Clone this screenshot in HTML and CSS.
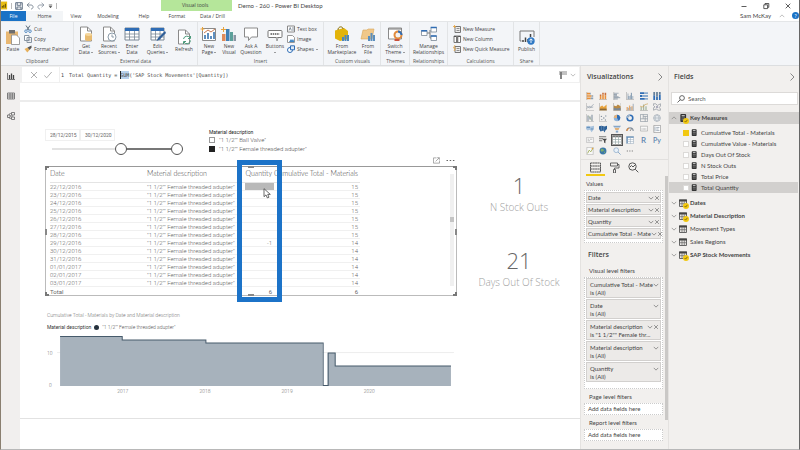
FILE: index.html
```html
<!DOCTYPE html>
<html lang="en">
<head>
<meta charset="utf-8">
<title>Demo - 260 - Power BI Desktop</title>
<link rel="stylesheet" href="styles.css">
</head>
<body>
<svg class="defs" aria-hidden="true">
  <symbol id="chev-down" viewBox="0 0 8 8"><path d="M1 2.500 4 5.500 7 2.500" fill="none" stroke="currentColor"/></symbol>
  <symbol id="chev-up" viewBox="0 0 8 8"><path d="M1 5.500 4 2.500 7 5.500" fill="none" stroke="currentColor"/></symbol>
  <symbol id="chev-right" viewBox="0 0 8 8"><path d="M2.500 .5 6 4 2.500 7.500" fill="none" stroke="currentColor"/></symbol>
  <symbol id="close" viewBox="0 0 8 8"><path d="M1.500 1.500l5 5M6.500 1.500l-5 5" fill="none" stroke="currentColor"/></symbol>
  <symbol id="doc" viewBox="0 0 16 16"><path d="M2.500 1h7l4 4v10h-11z" fill="#fff" stroke="#8a8a8a"/><path d="M9.500 1v4h4" fill="none" stroke="#8a8a8a"/></symbol>
  <symbol id="calc" viewBox="0 0 8 9"><rect x="1" width="6.500" height="9" rx="1" fill="#333"/><path d="M2.500 2h3.500" stroke="#fff"/><path d="M2.500 4.500h3.500M2.500 6.500h3.500" stroke="#aaa" stroke-dasharray="1 .3"/></symbol>
  <symbol id="tbl" viewBox="0 0 8 8"><path d="M.5 1h7v6.500h-7z" fill="#e8e6e4" stroke="#666"/><path d="M0 1.500h8" stroke="#444" stroke-width="2"/><path d="M.5 4.700h7M3 2v5.500M5.300 2v5.500" stroke="#666" stroke-width=".7"/></symbol>
  <symbol id="tick" viewBox="0 0 6 6"><circle cx="3" cy="3" r="3" fill="#f2c811"/><path d="M1.600 3.100l1 1 1.800-2.200" fill="none" stroke="#5b4c10" stroke-width=".7"/></symbol>
</svg>

<header class="titlebar">
  <div class="quick">
    <svg class="logo" viewBox="0 0 8 9"><path d="M0 0h7v9H0z" fill="#e8bd13"/><path d="M1.500 7V5M3.200 7V4M5 7V2.500" stroke="#4a3b00"/></svg>
    <i class="bar"></i>
    <button aria-label="Save"><svg viewBox="0 0 8 8"><path d="M.7.7h6.600v6.600H.7zM2.200.7v2.600h3.600V.7M2 7.300V5h4v2.300" fill="none" stroke="#56677c" stroke-width=".9"/></svg></button>
    <button aria-label="Undo"><svg viewBox="0 0 8 8"><path d="M3.500.8 1 3l2.500 2.200M1.200 3H5c3 .2 2.500 4 0 4" fill="none" stroke="#7b8794" stroke-width=".9"/></svg></button>
    <button aria-label="Redo"><svg viewBox="0 0 8 8"><path d="M4.500.8 7 3 4.500 5.200M6.800 3H3C0 3.200.5 7 3 7" fill="none" stroke="#8e99a5" stroke-width=".9"/></svg></button>
    <button class="more" aria-label="Customize"><svg viewBox="0 0 5 8"><path d="M.8 3h3.400" stroke="#333" stroke-width=".7"/><path d="M.8 4.300h3.400L2.500 6z" fill="#333"/></svg></button>
    <i class="bar"></i>
  </div>
  <div class="context">Visual tools</div>
  <div class="title">Demo - 260 - Power BI Desktop</div>
  <div class="window">
    <button aria-label="Minimize"><svg viewBox="0 0 8 8"><path d="M1.500 4.500h5" stroke="#333" stroke-width=".8"/></svg></button>
    <button aria-label="Restore"><svg viewBox="0 0 8 8"><path d="M1.800 2.800h3.800v3.800H1.800zM3 2.700V1.500h3.800v3.800H5.700" fill="none" stroke="#333" stroke-width=".8"/></svg></button>
    <button aria-label="Close"><svg viewBox="0 0 8 8"><path d="M1.700 1.700l4.600 4.600M6.300 1.700 1.700 6.300" stroke="#333" stroke-width=".8"/></svg></button>
  </div>
</header>

<nav class="tabs">
  <button class="file">File</button>
  <button class="home">Home</button>
  <button class="view">View</button>
  <button class="modeling">Modeling</button>
  <button class="help">Help</button>
  <button class="format">Format</button>
  <button class="drill">Data / Drill</button>
  <span class="user">Sam McKay</span>
  <svg class="s6 faint"><use href="#chev-up"/></svg>
  <button class="info" aria-label="Help">?</button>
</nav>

<section class="ribbon">
  <div class="group g-clip">
    <div class="tools">
      <button class="big w-22"><svg viewBox="0 0 16 16"><path d="M1 2.500h12V15H1z" fill="#e9b872"/><path d="M4 1h6v3.500H4z" fill="#6d6d6d"/><path d="M6.500 6h5l3 3v6.500h-8z" fill="#fff" stroke="#888" stroke-width=".8"/></svg>Paste</button>
      <div class="small">
        <button><svg viewBox="0 0 8 8"><path d="M2 .5 5 5M6 .5 3 5" stroke="#5d6c7c"/><circle cx="2" cy="6.200" r="1.300" fill="none" stroke="#5a8fc4"/><circle cx="6" cy="6.200" r="1.300" fill="none" stroke="#5a8fc4"/></svg>Cut</button>
        <button><svg viewBox="0 0 8 8"><path d="M.5.500h4.500v5H.5zM3 2.500h4.500v5H3z" fill="#fff" stroke="#8794a2"/><path d="M4 4.300h2.500M4 5.800h2.500" stroke="#8794a2" stroke-width=".6"/></svg>Copy</button>
        <button><svg viewBox="0 0 8 8"><path d="M.5 4 3.500 2.500l2 2.500-2.200 2.500z" fill="#e6b05c"/><path d="M3.500 2.500 7.500.5v2.200L5.500 5" fill="#555"/></svg>Format Painter</button>
      </div>
    </div>
    <h2>Clipboard</h2>
  </div>
  <div class="group g-data">
    <div class="tools">
      <button class="big w-22"><svg><use href="#doc"/><path d="M7 8.500v5c0 2 7 2 7 0v-5" fill="#e8bb70"/><ellipse cx="10.500" cy="8.500" rx="3.500" ry="1.400" fill="#f5d79e"/></svg>Get<br>Data <b></b></button>
      <button class="big w-24"><svg><use href="#doc"/><circle cx="11" cy="11" r="4" fill="#fff" stroke="#8a9aa8"/><path d="M11 8.500V11h2" fill="none" stroke="#8a9aa8"/></svg>Recent<br>Sources <b></b></button>
      <button class="big w-22"><svg viewBox="0 0 16 16"><path d="M1 2h14v12H1z" fill="#fff" stroke="#7a8896"/><path d="M1 2h14v3H1z" fill="#2f6db5"/><path d="M1 8h14M1 11h14M5.500 5v9M10.500 5v9" stroke="#7a8896" stroke-width=".8"/></svg>Enter<br>Data</button>
      <button class="big w-29"><svg viewBox="0 0 16 16"><path d="M1 2h13v12H1z" fill="#fff" stroke="#7a8896"/><path d="M1 2h13v3H1z" fill="#2f6db5"/><path d="M1 8h13M1 11h13M5.500 5v9M10 5v9" stroke="#7a8896" stroke-width=".8"/><path d="M15 5 8 12l-1.500 3 3-1.200L16 7z" fill="#2f5f99"/></svg>Edit<br>Queries <b></b></button>
      <button class="big w-24"><svg><use href="#doc"/><path d="M7.500 10a3.500 3.500 0 0 1 6.500-1M14.500 11.500a3.500 3.500 0 0 1-6.500 1.500M14.500 7v2.500H12M7.500 15v-2.500H10" fill="none" stroke="#4b9a7a"/></svg>Refresh</button>
    </div>
    <h2>External data</h2>
  </div>
  <div class="group g-insert">
    <div class="tools">
      <button class="big w-20"><svg viewBox="0 0 16 16"><path d="M1.500 2.500h13v12h-13z" fill="#fff" stroke="#8a8a8a"/><path d="M4 13V9M7 13V7M10 13v-3M13 13V6" stroke="#5f8fc0" stroke-width="2"/><path d="m3 7 4-3 3 2 4-3" fill="none" stroke="#c97a52"/><path d="M1.500 1v4M-.5 3h4" stroke="#e8a33c"/></svg>New<br>Page <b></b></button>
      <button class="big w-20"><svg viewBox="0 0 16 16"><path d="M1 8h3.500v7H1z" fill="#e08a5a"/><path d="M5 3h3.500v12H5z" fill="#3f7fb6"/><path d="M9 6h3v9H9z" fill="#5ca09a"/><path d="M12.500 9H15v6h-2.500z" fill="#8a96a3"/><path d="M2.500 1v5M0 3.500h5" stroke="#e8a33c"/></svg>New<br>Visual</button>
      <button class="big w-24"><svg viewBox="0 0 16 16"><path d="M1.500 2h13v9h-6l-3 3.500V11h-4z" fill="#fff" stroke="#8a8a8a"/></svg>Ask A<br>Question</button>
      <button class="big w-24"><svg viewBox="0 0 16 16"><rect x="1" y="4.500" width="14" height="7" rx="1" fill="#fff" stroke="#777"/><path d="M3.500 8h9" stroke="#555" stroke-width="1.600" stroke-dasharray="1.500 .7"/><path d="m9 11 1 4 1-3" fill="#fff" stroke="#777" stroke-width=".7"/></svg>Buttons<br><b></b></button>
      <div class="small">
        <button><svg viewBox="0 0 8 8"><path d="M.5 1h7v6h-7z" fill="#fff" stroke="#888"/><path d="m2 5.500 1.200-3 1.200 3M5 3h2M5 5h2" fill="none" stroke="#567" stroke-width=".7"/></svg>Text box</button>
        <button><svg viewBox="0 0 8 8"><path d="M.5.500h5l2 2v5h-7z" fill="#fff" stroke="#999"/><path d="m2 7 2-3 1 1.500L6 4l1.500 3z" fill="#3f86c4"/></svg>Image</button>
        <button><svg viewBox="0 0 8 8"><circle cx="3" cy="5" r="2.500" fill="#fff" stroke="#2f6db5"/><path d="M3.500.8h4v4h-4z" fill="#dbe8f6" stroke="#2f6db5"/></svg>Shapes <b></b></button>
      </div>
    </div>
    <h2>Insert</h2>
  </div>
  <div class="group g-custom">
    <div class="tools">
      <button class="big w-32"><svg viewBox="0 0 16 16"><path d="M1 4.500 10 2l4 3v8L6 15l-5-2.500z" fill="#e3b40a"/><path d="M4 4c0-4 5-4 5-1" fill="none" stroke="#8a6d00"/><path d="M9 15v-4M11.500 15V9M14 15v-6" stroke="#4c87bd" stroke-width="2"/></svg>From<br>Marketplace</button>
      <button class="big w-20"><svg viewBox="0 0 16 16"><path d="M1 13 3 4h4l1-1h6l-2 10z" fill="#f0c88a" stroke="#d9a657" stroke-width=".6"/><path d="M9 15v-5M11.500 15V7M14 15V9" stroke="#5b8fbe" stroke-width="2"/></svg>From<br>File</button>
    </div>
    <h2>Custom visuals</h2>
  </div>
  <div class="group g-theme">
    <div class="tools">
      <button class="big w-24"><svg viewBox="0 0 16 16"><path d="M1.500 2h13v11h-13z" fill="#fff" stroke="#8a8a8a"/><path d="M1.500 3h13" stroke="#777"/><circle cx="11" cy="9" r="3.500" fill="#f2f2f2" stroke="#e08a3c" stroke-width="2"/><path d="M11 5.500A3.500 3.500 0 0 1 14.500 9" fill="none" stroke="#2f6db5" stroke-width="2"/><path d="M7.500 14h5" stroke="#c94f3a" stroke-width="2"/></svg>Switch<br>Theme <b></b></button>
    </div>
    <h2>Themes</h2>
  </div>
  <div class="group g-rel">
    <div class="tools">
      <button class="big w-36"><svg viewBox="0 0 16 16"><path d="M6 7h3M9 4v8h2" fill="none" stroke="#777"/><path d="M.5 5h5.500v4.500H.5zM10 1.500h5.500V6H10zM10 10h5.500v4.500H10z" fill="#fff" stroke="#7a8896" stroke-width=".8"/><path d="M.2 4.800h6M9.700 1.500h6M9.700 10h6" stroke="#2f6db5" stroke-width="1.500"/></svg>Manage<br>Relationships</button>
    </div>
    <h2>Relationships</h2>
  </div>
  <div class="group g-calc">
    <div class="tools">
      <div class="small">
        <button><svg viewBox="0 0 8 8"><path d="M2 1.500h5.500v6H2z" fill="#eee" stroke="#777"/><path d="M3.500 3.500h3M3.500 5.500h3" stroke="#777" stroke-width=".8"/><path d="M1.500 0v3M0 1.500h3" stroke="#e8a33c" stroke-width=".8"/></svg>New Measure</button>
        <button><svg viewBox="0 0 8 8"><path d="M1 1h6.500v6.500H1z" fill="#fff" stroke="#777"/><path d="M1 1.500h6.500" stroke="#555"/><path d="M3 1h2.300v6.500H3z" fill="#777"/></svg>New Column</button>
        <button><svg viewBox="0 0 8 8"><path d="M2 1.500h5.500v6H2z" fill="#eee" stroke="#777"/><path d="M3.500 3.500h3M3.500 5.500h3" stroke="#777" stroke-width=".8"/><path d="m2 0-1.500 3h2L1 6" fill="none" stroke="#e8a33c" stroke-width=".8"/></svg>New Quick Measure</button>
      </div>
    </div>
    <h2>Calculations</h2>
  </div>
  <div class="group g-share">
    <div class="tools">
      <button class="big w-24"><svg viewBox="0 0 16 16"><path d="M2.500 12H1V2h14v6" fill="none" stroke="#777"/><path d="M4 13v-2M6.500 13V8.500M9 13v-3M11.500 8V5" stroke="#444" stroke-width="1.500"/><circle cx="12" cy="12" r="3.700" fill="#2f78c4"/><path d="M12 14v-4M10.300 11.500 12 9.800l1.700 1.700" fill="none" stroke="#fff" stroke-width=".9"/></svg>Publish</button>
    </div>
    <h2>Share</h2>
  </div>
</section>

<div class="work">
  <nav class="rail">
    <button aria-label="Report"><svg viewBox="0 0 8 8"><path d="M.5 1v6.500H8" fill="none" stroke="#444" stroke-width=".7"/><path d="M2.500 7V3M4.500 7V1.500M6.500 7V3" stroke="#444" stroke-width="1.300"/></svg></button>
    <button aria-label="Data"><svg viewBox="0 0 8 8"><path d="M.5 1h7v6h-7zM.5 3h7M.5 5h7M3 1v6M5.300 1v6" fill="none" stroke="#666" stroke-width=".8"/></svg></button>
    <button aria-label="Model"><svg viewBox="0 0 8 8"><path d="M.5 3h2.500v2.500H.5zM4.500.5h3V3h-3zM4.500 5h3v2.500h-3zM2 3c0-1.500 1-1.500 2.500-1.500M2 5.500c0 1 1 1 2.500 1M3 4h3" fill="none" stroke="#666" stroke-width=".8"/></svg></button>
  </nav>

  <main class="report">
    <div class="formula">
      <div class="commit">
        <button aria-label="Cancel"><svg viewBox="0 0 8 8"><path d="M1 1l6 6M7 1 1 7" stroke="#999" stroke-width=".8"/></svg></button>
        <button aria-label="Accept"><svg viewBox="0 0 8 8"><path d="m.3 4.500 2.400 2.300L7.700 1" fill="none" stroke="#999" stroke-width=".8"/></svg></button>
      </div>
      <div class="editor">
        <label for="dax">1</label>
        <div class="code"><span class="mark"></span><input id="dax" value="Total Quantity = SUM('SAP Stock Movements'[Quantity])"></div>
        <svg class="s8" viewBox="0 0 8 8"><path d="M0 1h8M0 3h8" stroke="#888" stroke-width="1.200"/><path d="M2 1v7" stroke="#777" stroke-width="1.800"/></svg>
        <svg class="s6 faint"><use href="#chev-down"/></svg>
      </div>
    </div>

    <div class="page">
      <div class="visuals">
        <div class="slicers">
          <div class="dates">
            <div class="pair">
              <input aria-label="Start date" value="28/12/2015"><input aria-label="End date" value="30/12/2020">
            </div>
            <div class="range">
              <input type="range" aria-label="From" value="55"><input type="range" aria-label="To" value="100">
            </div>
          </div>
          <fieldset class="material">
            <legend>Material description</legend>
            <label><input type="checkbox">"1 1/2"" Ball Valve"</label>
            <label><input type="checkbox" checked>"1 1/2"" Female threaded adupter"</label>
          </fieldset>
        </div>

        <div class="toolbar">
          <svg class="s7" viewBox="0 0 8 8"><path d="M4 1H.5v6h7V4M3 5l4-4M4.800.8H7.300v2.400" fill="none" stroke="#777" stroke-width=".7"/></svg>
          <svg class="dots" viewBox="0 0 9 3"><path d="M.5 1.500h8" stroke="#666" stroke-dasharray="1.500 1.700"/></svg>
        </div>
        <div class="tablebox">
          <table>
            <thead><tr><th>Date</th><th>Material description</th><th>Quantity</th><th>Cumulative Total - Materials</th></tr></thead>
            <tbody>
              <tr><td>22/12/2016</td><td>"1 1/2"" Female threaded adupter"</td><td class="picked"></td><td>15</td></tr>
              <tr><td>23/12/2016</td><td>"1 1/2"" Female threaded adupter"</td><td></td><td>15</td></tr>
              <tr><td>24/12/2016</td><td>"1 1/2"" Female threaded adupter"</td><td></td><td>15</td></tr>
              <tr><td>25/12/2016</td><td>"1 1/2"" Female threaded adupter"</td><td></td><td>15</td></tr>
              <tr><td>26/12/2016</td><td>"1 1/2"" Female threaded adupter"</td><td></td><td>15</td></tr>
              <tr><td>27/12/2016</td><td>"1 1/2"" Female threaded adupter"</td><td></td><td>15</td></tr>
              <tr><td>28/12/2016</td><td>"1 1/2"" Female threaded adupter"</td><td></td><td>15</td></tr>
              <tr><td>29/12/2016</td><td>"1 1/2"" Female threaded adupter"</td><td>-1</td><td>14</td></tr>
              <tr><td>30/12/2016</td><td>"1 1/2"" Female threaded adupter"</td><td></td><td>14</td></tr>
              <tr><td>31/12/2016</td><td>"1 1/2"" Female threaded adupter"</td><td></td><td>14</td></tr>
              <tr><td>01/01/2017</td><td>"1 1/2"" Female threaded adupter"</td><td></td><td>14</td></tr>
              <tr><td>02/01/2017</td><td>"1 1/2"" Female threaded adupter"</td><td></td><td>14</td></tr>
              <tr><td>03/01/2017</td><td>"1 1/2"" Female threaded adupter"</td><td></td><td>14</td></tr>
            </tbody>
            <tfoot><tr><td>Total</td><td></td><td>6</td><td>6</td></tr></tfoot>
          </table>
          <div class="scroll"><i></i></div>
          <span class="handle tl"></span><span class="handle tr"></span><span class="handle bl"></span><span class="handle br"></span>
          <span class="grip left"></span><span class="grip right"></span><span class="grip top"></span><span class="grip bottom"></span>
          <div class="highlight"></div>
          <svg class="cursor" viewBox="0 0 8 11"><path d="M1 .7v8l2-1.800 1.300 3L6 9.200 4.700 6.400h2.600z" fill="#fff" stroke="#444" stroke-width=".8"/></svg>
        </div>

        <div class="chart">
          <h3>Cumulative Total - Materials by Date and Material description</h3>
          <p class="legend"><strong>Material description</strong><i></i>"1 1/2"" Female threaded adupter"</p>
          <svg viewBox="0 0 412 62">
            <path d="M12 19.500h396" stroke="#e6e6e6" stroke-width=".7"/>
            <path d="M15 53V3.500h62V7h83.500v3H277v43zM282 53V20h7.500v13H405v20z" fill="#a7b2bc"/>
            <path d="M15 3.500h62V7h83.500v3H277.500v42.500h5V20h7v13H405" fill="none" stroke="#465a6b"/>
            <g class="axis"><text x="2" y="22">10</text><text x="4" y="54">0</text><text x="72" y="60">2017</text><text x="154" y="60">2018</text><text x="236" y="60">2019</text><text x="318" y="60">2020</text></g>
          </svg>
        </div>
      </div>

      <div class="cards">
        <div class="card"><span>1</span>N Stock Outs</div>
        <div class="card"><span>21</span>Days Out Of Stock</div>
      </div>
    </div>
  </main>

  <aside class="viz">
    <h2>Visualizations<svg class="s8"><use href="#chev-right"/></svg></h2>
    <div class="gallery">
      <svg viewBox="0 0 10 10"><path d="M1 0v10" stroke="#999" stroke-width=".7"/><path d="M1 2h4M1 5h6M1 8h5" stroke="#e8913c" stroke-width="2"/><path d="M5 2h1M7 5h2M6 8h3" stroke="#8aa0b4" stroke-width="2"/></svg>
      <svg viewBox="0 0 10 10"><path d="M0 9.500h10" stroke="#999" stroke-width=".7"/><path d="M2 9V5M5 9V3M8 9V4" stroke="#e8913c" stroke-width="2"/><path d="M2 5V3M5 3V1M8 4V1" stroke="#c96f3c" stroke-width="2"/></svg>
      <svg viewBox="0 0 10 10"><path d="M1 0v10" stroke="#999" stroke-width=".7"/><path d="M1 1.500h6M1 4.500h4M1 7h8" stroke="#aab4be" stroke-width="1.400"/><path d="M1 3h4M1 6h6M1 8.700h5" stroke="#6e7f90" stroke-width=".9"/></svg>
      <svg viewBox="0 0 10 10"><path d="M0 9.500h10M.5 0v9" stroke="#999" stroke-width=".7"/><path d="M2.500 9V2M5.500 9V4M8.500 9V5" stroke="#a9b6c2" stroke-width="1.300"/><path d="M3.700 9V5M6.700 9V1" stroke="#60809e"/></svg>
      <svg viewBox="0 0 10 10"><path d="M0 1.500h5M0 5h3M0 8.500h6" stroke="#2f6db5" stroke-width="2.200"/><path d="M5 1.500h5M3 5h7M6 8.500h4" stroke="#8eadcf" stroke-width="2.200"/></svg>
      <svg viewBox="0 0 10 10"><path d="M1.500 10V4M5 10V6M8.500 10V3" stroke="#2f6db5" stroke-width="2.200"/><path d="M1.500 4V0M5 6V0M8.500 3V0" stroke="#65809b" stroke-width="2.200"/></svg>

      <svg viewBox="0 0 10 10"><path d="M.5 0v9.500H10" fill="none" stroke="#aaa" stroke-width=".7"/><path d="m1 7 3-3 2 1 3.500-3.500M1 4l3 2 5-1" fill="none" stroke="#8794a2" stroke-width=".8"/></svg>
      <svg viewBox="0 0 10 10"><path d="M.5 0v9.500H10" fill="none" stroke="#999" stroke-width=".7"/><path d="M1 9V5l3-2 2 2 3.500-3v7z" fill="#e8a33c"/><path d="M1 9V7l8.500 0v2z" fill="#8a6a3a"/></svg>
      <svg viewBox="0 0 10 10"><path d="M.5 0v9.500H10V0" fill="none" stroke="#999" stroke-width=".7"/><path d="M1 9V3l3 1 2-2 3.500 2v5z" fill="#b98a44"/><path d="M1 9V6l4 1 4.500-1v3z" fill="#7a8896"/></svg>
      <svg viewBox="0 0 10 10"><path d="M0 9.500h10" stroke="#999" stroke-width=".7"/><path d="M1.500 9V5M4.500 9V3M7.500 9V4" stroke="#e8a96c" stroke-width="1.600"/><path d="M3 9V6M6 9V5M9 9V1" stroke="#8ea0b0"/></svg>
      <svg viewBox="0 0 10 10"><path d="M0 9.500h10" stroke="#999" stroke-width=".7"/><path d="M1.500 9V5M4.500 9V2M7.500 9V4" stroke="#a8b7a0" stroke-width="1.600"/><path d="m0 4 4 1 2-3 4-1" fill="none" stroke="#c9a050" stroke-width=".8"/></svg>
      <svg viewBox="0 0 10 10"><path d="M.5 1h3l2 2 4-2v3l-2 1.500 2 2V9h-3L4 7.500.5 9V6l2-1-2-2z" fill="none" stroke="#8f979f" stroke-width=".9"/><circle cx="5" cy="5" r="1.500" fill="#aab"/></svg>

      <svg viewBox="0 0 10 10"><path d="M.5 0v9.500H10" fill="none" stroke="#aaa" stroke-width=".7"/><path d="M2.500 9V2M5 7V3M7.500 9V1" stroke="#8c9aa8" stroke-width="1.500"/><path d="M3 2l4 6" stroke="#9cb08c" stroke-width=".7"/></svg>
      <svg viewBox="0 0 10 10"><path d="M.5 0v9.500H10" fill="none" stroke="#aaa" stroke-width=".7"/><g fill="#8794a2"><circle cx="3" cy="3" r=".9"/><circle cx="6" cy="5" r="1"/><circle cx="8.500" cy="2.500" r=".8"/><circle cx="3.500" cy="7" r=".8"/><circle cx="8" cy="7.500" r=".8"/></g></svg>
      <svg viewBox="0 0 10 10"><circle cx="5" cy="5" r="4" fill="#8fb2d8"/><path d="M5 5V1a4 4 0 0 1 2 7.500z" fill="#2f6db5"/><path d="M5 5H1a4 4 0 0 1 4-4z" fill="#e3b27c"/></svg>
      <svg viewBox="0 0 10 10"><circle cx="5" cy="5" r="3.500" fill="none" stroke="#2f6db5" stroke-width="2"/><path d="M1.500 5A3.500 3.500 0 0 1 5 1.500" fill="none" stroke="#9fb4c9" stroke-width="2"/></svg>
      <svg viewBox="0 0 10 10"><path d="M.5.500h9v9h-9zM.5 6h9M4 .5V6M4 3h5.500M6.500 3v6.500" fill="none" stroke="#8f99a3" stroke-width=".9"/></svg>
      <svg viewBox="0 0 10 10"><circle cx="5" cy="5" r="4.200" fill="#e4e8ec" stroke="#9aa4ae" stroke-width=".8"/><path d="M.8 5h8.400M5 .8c-3 2.500-3 6 0 8.400 3-2.500 3-6 0-8.400" fill="none" stroke="#9aa4ae" stroke-width=".6"/></svg>

      <svg viewBox="0 0 10 10"><path d="M0 2l3-1 3 1 4-1v4L7 9l-2-3-3 1-2-2z" fill="#a9c3dd"/><path d="M1 3h4M6 5h3" stroke="#4e7dae"/></svg>
      <svg viewBox="0 0 10 10"><path d="M0 1.500 3 1l4 1 3-1v4L8 7 7 9.500 5.500 7 2 8 0 5z" fill="#2c5f96"/><path d="M3 1v6M6 2v5" stroke="#89a9c9" stroke-width=".6"/></svg>
      <svg viewBox="0 0 10 10"><path d="M0 1h10L8.500 3h-7z" fill="#86a6c8"/><path d="M2 4h6L7 6H3z" fill="#d99b52"/><path d="M3.500 7h3v2.500h-3z" fill="#86a6c8"/></svg>
      <svg viewBox="0 0 10 10"><path d="M1 7.500a4 4 0 0 1 8 0" fill="none" stroke="#8a96a3" stroke-width="1.500"/><path d="M1 7.500A4 4 0 0 1 3.500 4" fill="none" stroke="#e08a3c" stroke-width="1.500"/><path d="m5 7.500 2-3" stroke="#555" stroke-width=".8"/></svg>
      <svg viewBox="0 0 10 10"><path d="M.5 1.500h9v6h-9z" fill="#f8f8f8" stroke="#a4a4a4" stroke-width=".8"/><path d="M2 5h6" stroke="#888" stroke-dasharray="1 .6"/></svg>
      <svg viewBox="0 0 10 10"><path d="M1 .5h8.500v9H1z" fill="#fff" stroke="#8a8a8a" stroke-width=".8"/><path d="M2.500 2v6M4 3h4M4 5h3M4 7h4" stroke="#789" stroke-width=".8"/></svg>

      <svg viewBox="0 0 10 10"><path d="M.5 2h9v6h-9z" fill="#fafafa" stroke="#b0b0b0" stroke-width=".8"/><path d="M2 4h2M5 4h3M2 6h3" stroke="#999" stroke-width=".8"/></svg>
      <svg viewBox="0 0 10 10"><path d="M0 1h9M0 3.500h5M0 6h4" stroke="#777" stroke-width="1.300"/><path d="M4 3.500h6L8 6v3L6.300 8V6z" fill="#444"/></svg>
      <svg class="current" viewBox="0 0 10 10"><path d="M.5.500h9v9h-9z" fill="#fff" stroke="#8a8a8a" stroke-width=".8"/><path d="M.5 1.500h9" stroke="#777" stroke-width="1.500"/><path d="M.5 4.500h9M.5 7h9M3.500 1v8.500M6.500 1v8.500" stroke="#9aa" stroke-width=".7"/></svg>
      <svg viewBox="0 0 10 10"><path d="M.5.500h9v9h-9z" fill="#fff" stroke="#9fb0c0" stroke-width=".8"/><path d="M.5 1.500h9M1.500 1v8" stroke="#5f8ab4" stroke-width="1.500"/><path d="M.5 4.500h9M.5 7h9M5.500 1v8.500" stroke="#9ab" stroke-width=".7"/></svg>
      <span class="r">R</span>
      <span class="py">Py</span>

      <svg viewBox="0 0 10 10"><path d="M1 .5h8v9H1z" fill="#f8f8f8" stroke="#aaa" stroke-width=".7"/><path d="m2 8 2-4 2 2 3-5" fill="none" stroke="#9aa84c"/><circle cx="8" cy="2" r="1" fill="#e8a33c"/></svg>
      <svg viewBox="0 0 10 10"><circle cx="5" cy="5" r="4.300" fill="#3c78a8"/><path d="M3 2l3 1 0 2-3 1-1-2M6 6l2 0-1 2z" fill="#7fae6a"/></svg>
      <svg viewBox="0 0 10 10"><circle cx="4" cy="4" r="3" fill="#e9f1f9" stroke="#8aa9c8" stroke-width=".9"/><path d="m6.300 6.300 3.200 3.200" stroke="#8aa9c8" stroke-width="1.200"/></svg>
      <svg viewBox="0 0 10 10"><path d="M1 5h8" stroke="#777" stroke-width="1.300" stroke-dasharray="1.400 1.700"/></svg>
    </div>
    <div class="modes">
      <button class="on" aria-label="Fields"><svg viewBox="0 0 11 11"><path d="M.5 1h10v9H.5zM.5 4h10M.5 7h10" fill="none" stroke="#555" stroke-dasharray="2 .3"/></svg></button>
      <button aria-label="Format"><svg viewBox="0 0 11 11"><path d="M1.500 1h7v3h-7zM8.500 2.500h1.500V6H5.500v1.500M4.500 7.500h2V11h-2z" fill="none" stroke="#555" stroke-width=".9"/></svg></button>
      <button aria-label="Analytics"><svg viewBox="0 0 11 11"><circle cx="4.500" cy="4.500" r="3.700" fill="none" stroke="#555"/><path d="m7.300 7.300 3 3M2 5l1.500-1.500L5 5l2-2" fill="none" stroke="#555"/></svg></button>
    </div>
    <div class="viz-body">
      <div class="viz-scroll">
        <h4>Values</h4>
        <ul class="well">
          <li><span>Date</span><svg><use href="#chev-down"/></svg><svg><use href="#close"/></svg></li>
          <li><span>Material description</span><svg><use href="#chev-down"/></svg><svg><use href="#close"/></svg></li>
          <li><span>Quantity</span><svg><use href="#chev-down"/></svg><svg><use href="#close"/></svg></li>
          <li><span>Cumulative Total - Mate</span><svg><use href="#chev-down"/></svg><svg><use href="#close"/></svg></li>
        </ul>
        <h3>Filters</h3>
        <h4 class="in first">Visual level filters</h4>
        <ul class="filters">
          <li><p><span>Cumulative Total - Mate</span><svg><use href="#chev-down"/></svg></p>is (All)</li>
          <li><p><span>Date</span><svg><use href="#chev-down"/></svg></p>is (All)</li>
          <li><p><span>Material description</span><svg><use href="#chev-down"/></svg><svg><use href="#close"/></svg></p>is "1 1/2"" Female thr...</li>
          <li><p><span>Material description</span><svg><use href="#chev-down"/></svg></p>is (All)</li>
          <li><p><span>Quantity</span><svg><use href="#chev-down"/></svg></p>is (All)</li>
        </ul>
        <h4 class="in">Page level filters</h4>
        <div class="drop">Add data fields here</div>
        <h4 class="in">Report level filters</h4>
        <div class="drop">Add data fields here</div>
      </div>
      <i class="thumb"></i>
    </div>
  </aside>

  <aside class="fields">
    <h2>Fields<svg class="s8"><use href="#chev-right"/></svg></h2>
    <div class="search"><svg class="s8" viewBox="0 0 8 8"><circle cx="5" cy="3" r="2.400" fill="none" stroke="#444" stroke-width=".8"/><path d="M3.300 4.700.500 7.500" stroke="#444" stroke-width=".8"/></svg><input type="search" aria-label="Search" placeholder="Search"></div>
    <div class="entity open bold"><svg class="s6"><use href="#chev-up"/></svg><span class="ico"><svg><use href="#calc"/></svg><svg class="tick"><use href="#tick"/></svg></span>Key Measures</div>
    <div class="measures">
      <label><input type="checkbox" checked><svg><use href="#calc"/></svg>Cumulative Total - Materials</label>
      <label><input type="checkbox"><svg><use href="#calc"/></svg>Cumulative Value - Materials</label>
      <label><input type="checkbox"><svg><use href="#calc"/></svg>Days Out Of Stock</label>
      <label><input type="checkbox"><svg><use href="#calc"/></svg>N Stock Outs</label>
      <label><input type="checkbox"><svg><use href="#calc"/></svg>Total Price</label>
      <label class="selected"><input type="checkbox"><svg><use href="#calc"/></svg>Total Quantity</label>
    </div>
    <div class="entity bold"><svg class="s6"><use href="#chev-down"/></svg><span class="ico"><svg><use href="#tbl"/></svg><svg class="tick"><use href="#tick"/></svg></span>Dates</div>
    <div class="entity bold"><svg class="s6"><use href="#chev-down"/></svg><span class="ico"><svg><use href="#tbl"/></svg><svg class="tick"><use href="#tick"/></svg></span>Material Description</div>
    <div class="entity"><svg class="s6"><use href="#chev-down"/></svg><span class="ico"><svg><use href="#tbl"/></svg></span>Movement Types</div>
    <div class="entity"><svg class="s6"><use href="#chev-down"/></svg><span class="ico"><svg><use href="#tbl"/></svg></span>Sales Regions</div>
    <div class="entity bold"><svg class="s6"><use href="#chev-down"/></svg><span class="ico"><svg><use href="#tbl"/></svg><svg class="tick"><use href="#tick"/></svg></span>SAP Stock Movements</div>
  </aside>
</div>
</body>
</html>
```

FILE: styles.css
```css
* { box-sizing: border-box; }

body {
  margin: 0;
  min-height: 100vh;
  display: flex;
  flex-direction: column;
  border-left: 1px solid #8a7f70;
  border-right: 1px solid #666;
  border-bottom: 1px solid #b8b8b8;
  background: #fff;
  color: #444;
  font: 5px/6px "Open Sans", "Noto Sans", sans-serif;
  overflow: hidden;
}

h2, h3, h4, p, ul, fieldset { margin: 0; padding: 0; border: 0; font: inherit; list-style: none; }
button, input { margin: 0; padding: 0; border: 0; background: none; color: inherit; font: inherit; }
svg { display: block; flex: none; }
.defs { position: absolute; width: 0; height: 0; }
.s6 { width: 6px; height: 6px; }
.s7 { width: 7px; height: 7px; }
.s8 { width: 8px; height: 8px; }
.faint { color: #aaa; }

/* Title bar and tabs */
.titlebar { display: flex; height: 11px; align-items: center; }
.quick { display: flex; align-items: center; gap: 3px; width: 160px; }
.quick svg { width: 8px; height: 8px; }
.quick .logo { width: 7px; height: 9px; }
.quick .more svg { width: 5px; }
.quick .bar { width: 1px; height: 6px; background: #bbb; }
.context { width: 71px; height: 11px; padding-left: 21px; line-height: 10px; background: #b5e69a; }
.title { flex: 1; padding-left: 6px; font: 6px/10px Lato, sans-serif; }
.window { display: flex; gap: 14px; padding-right: 7px; }
.window svg { width: 8px; height: 8px; }

.tabs { display: flex; height: 10px; align-items: stretch; }
.tabs button { text-align: center; }
.tabs .file { width: 25px; background: #1a72c6; color: #fff; }
.tabs .home { width: 37px; background: #f3f5f7; }
.tabs .view { width: 26px; }
.tabs .modeling { width: 38px; }
.tabs .help { width: 34px; }
.tabs .format { width: 32px; }
.tabs .drill { width: 39px; }
.tabs .user { margin-left: auto; font: 6px/10px Lato, sans-serif; }
.tabs > svg { margin: 2px 7px 0 8px; }
.tabs .info { width: 7px; height: 7px; margin-top: 1px; border-radius: 50%; background: #1a72c6; color: #fff; }

/* Ribbon */
.ribbon { display: flex; height: 45px; background: #f3f5f8; border-top: 1px solid #e4e6e8; border-bottom: 1px solid #dcdee0; }
.group { display: flex; flex-direction: column; padding: 2px 1px 1px; border-right: 1px solid #e2e4e6; }
.tools { display: flex; flex: 1; }
.group h2 { text-align: center; color: #555; }
.g-clip { width: 73px; }
.g-data { width: 124px; }
.g-insert { width: 126px; }
.g-custom { width: 57px; padding-left: 2px; }
.g-theme { width: 29px; padding-left: 2px; }
.g-rel { width: 38px; }
.g-calc { width: 66px; }
.g-calc .tools { padding-left: 4px; }
.g-share { width: 26px; }
.big { display: block; height: 32px; text-align: center; line-height: 6px; }
.big svg { width: 16px; height: 16px; margin: 0 auto 1px; overflow: visible; }
.ribbon b { display: inline-block; border: 1px solid transparent; border-top-color: #444; border-bottom: 0; vertical-align: middle; }
.w-20 { width: 20px; }
.w-22 { width: 22px; }
.w-24 { width: 24px; }
.w-29 { width: 29px; }
.w-32 { width: 32px; }
.w-36 { width: 36px; }
.small button { display: flex; align-items: center; gap: 2px; height: 10px; white-space: nowrap; }
.small svg { width: 8px; height: 8px; }

/* Work area */
.work { display: flex; flex: 1; }
.rail { display: flex; flex-direction: column; align-items: center; gap: 12px; width: 19px; padding-top: 6px; background: #f1efee; }
.rail svg { width: 8px; height: 8px; }
.report { flex: 1; display: flex; flex-direction: column; min-width: 0; }

.formula { display: flex; gap: 1px; height: 17px; padding: 1px 1px 1px 2px; background: #f0f0f0; }
.commit { display: flex; align-items: center; justify-content: center; gap: 6px; width: 37px; background: #fff; }
.commit svg { width: 8px; height: 8px; }
.editor { display: flex; flex: 1; align-items: center; gap: 3px; padding: 0 3px 0 1px; background: #fff; font: 5px/8px "DejaVu Sans Mono", monospace; }
.code { position: relative; flex: 1; padding-left: 2px; }
.code input { position: relative; display: block; width: 100%; }
.mark { position: absolute; left: calc(2px + 17ch); top: 0; width: 3ch; height: 8px; background: #b9d3ee; border-left: 1px solid #222; }

.page { flex: 1; display: flex; margin: 17px 0 30px; padding: 27px 0 0 25px; border-top: 2px solid #ececec; border-bottom: 1px solid #e2e2e2; font-family: Roboto, "Open Sans", sans-serif; font-weight: 300; }
.visuals { flex: 1; min-width: 0; }

.slicers { display: flex; height: 26px; }
.dates { width: 164px; }
.pair { display: flex; height: 12px; }
.pair input { width: 35px; padding-left: 4px; border: 1px solid #f0f0f0; font-weight: 400; color: #666; }
.range { position: relative; height: 12px; margin: 2px 26px 0 1px; }
.range::before { content: ""; position: absolute; left: 6px; right: 6px; top: 5px; height: 2px; background: linear-gradient(90deg, #e2e2e2 55%, #777 55%); }
.range input { position: absolute; inset: 0; width: 100%; height: 12px; appearance: none; pointer-events: none; }
.range input::-webkit-slider-thumb { appearance: none; width: 12px; height: 12px; border: 1px solid #555; border-radius: 50%; background: #fff; pointer-events: auto; }
.material legend { padding: 0; line-height: 6px; color: #222; font-weight: 400; }
.material label { display: flex; align-items: center; gap: 4px; height: 9px; font-size: 6px; color: #555; }
.material input { appearance: none; width: 6px; height: 6px; border: 1px solid #999; }
.material input:checked { background: #222; border-color: #222; }

.toolbar { display: flex; justify-content: flex-end; align-items: center; gap: 6px; height: 11px; padding-right: 3px; }
.dots { width: 9px; height: 3px; }
.tablebox { position: relative; display: flex; justify-content: space-between; height: 130px; padding: 1px 2px 0 4px; border: 1px solid #bbb; border-top-color: #999; margin-right: 1px; }
.tablebox table { width: 310px; border-collapse: collapse; table-layout: fixed; font-size: 6px; color: #666; }
.tablebox th { height: 14px; padding: 0 0 2px; border-bottom: 1px solid #e4e4e4; font: 300 7px/9px Lato, sans-serif; color: #444; text-align: left; white-space: nowrap; }
.tablebox td { height: 8px; padding: 0; line-height: 7px; border-bottom: 1px solid #f0f0f0; white-space: nowrap; }
.tablebox th:nth-child(1) { width: 97px; }
.tablebox th:nth-child(2) { width: 98px; }
.tablebox th:nth-child(3) { width: 29px; }
.tablebox th:nth-child(n+3), .tablebox td:nth-child(n+3) { padding-right: 2px; text-align: right; }
.tablebox .picked { background: #b9b9b9; }
.tablebox tfoot td { height: 11px; border: 0; border-top: 1px solid #ddd; font-weight: 400; }
.scroll { width: 4px; margin: 6px 0 9px; background: #f0f0f0; }
.scroll i { display: block; height: 5px; margin-top: 43px; background: #c4c4c4; }
.handle { position: absolute; width: 4px; height: 4px; border: 0 solid #777; }
.tl { left: -1px; top: -1px; border-width: 2px 0 0 2px; }
.tr { right: -1px; top: -1px; border-width: 2px 2px 0 0; }
.bl { left: -1px; bottom: -1px; border-width: 0 0 2px 2px; }
.br { right: -1px; bottom: -1px; border-width: 0 2px 2px 0; }
.grip { position: absolute; background: #888; }
.grip.left, .grip.right { top: 62px; width: 2px; height: 6px; }
.grip.left { left: -1px; }
.grip.right { right: -1px; }
.grip.top, .grip.bottom { left: 202px; width: 6px; height: 2px; }
.grip.top { top: -1px; }
.grip.bottom { bottom: -1px; }
.highlight { position: absolute; left: 191px; top: -7px; width: 45px; height: 142px; border: 5px solid #1c73c8; }
.cursor { position: absolute; left: 217px; top: 21px; width: 8px; height: 11px; }

.chart { padding-top: 15px; color: #777; }
.chart h3, .chart p { padding-left: 2px; line-height: 8px; }
.chart .legend { display: flex; align-items: center; gap: 3px; margin-top: 4px; color: #555; }
.chart .legend strong { font-weight: 400; color: #333; }
.chart .legend i { width: 5px; height: 5px; border-radius: 50%; background: #26323d; }
.chart svg { width: 100%; height: auto; margin-top: 2px; }
.axis { font-size: 5px; fill: #777; }

.cards { width: 122px; padding-top: 41px; text-align: center; font-family: "Open Sans", sans-serif; }
.card { height: 75px; font-size: 10px; line-height: 14px; color: #a0a0a0; }
.card span { display: block; font-size: 22px; line-height: 30px; color: #666; }

/* Side panes */
.viz, .fields { background: #f2f0ee; border-left: 1px solid #e4e2e0; font: 6px/8px Lato, "Open Sans", sans-serif; }
.viz h2, .fields h2, .viz h3 { font: 600 7px/10px "Open Sans", sans-serif; color: #444; }
.viz h2, .fields h2 { display: flex; justify-content: space-between; align-items: center; height: 22px; }
.viz h2 svg, .fields h2 svg { color: #888; }
.viz { width: 88px; display: flex; flex-direction: column; }
.viz h2 { padding: 0 4px 0 6px; }
.gallery { display: grid; grid-template-columns: repeat(6, 10px); justify-content: space-between; row-gap: 1px; padding: 3px 6px 0 4px; }
.gallery > * { width: 10px; height: 10px; }
.gallery svg { padding: 1px; }
.gallery .current { padding: 0; outline: 1px solid #555; }
.gallery span { font-size: 8px; line-height: 10px; font-weight: 600; color: #5f86b0; text-align: center; }
.gallery .py { font-size: 7px; }
.modes { display: flex; height: 17px; margin-top: 3px; padding-left: 5px; border-top: 1px solid #e2e0de; }
.modes button { width: 19px; border-bottom: 2px solid transparent; }
.modes .on { border-color: #f2c811; }
.modes svg { width: 11px; height: 11px; margin: 0 auto; }
.viz-body { display: flex; flex: 1; }
.viz-scroll { flex: 1; min-width: 0; padding: 0 2px 0 3px; }
.thumb { width: 3px; height: 244px; background: #cac8c6; }
.viz h4 { padding-left: 2px; margin: 4px 0 2px; }
.viz h4.in { padding-left: 5px; }
.viz h4.first { margin-top: 7px; }
.well, .filters { display: grid; grid-template-columns: minmax(0, 1fr); gap: 1px; padding: 1px 1px 3px; border: 1px dotted #ccc; background: #fff; }
.well li { display: flex; align-items: center; height: 11px; padding: 0 0 0 1px; background: #eceae8; border: 1px solid #d2d0ce; }
.well span, .filters span { flex: 1; white-space: nowrap; }
.well svg, .filters svg { width: 6px; height: 6px; color: #777; }
.viz h3 { margin-top: 7px; padding-left: 4px; }
.filters { padding: 0 1px 6px; }
.filters li { height: 20px; padding: 1px 1px 1px 3px; background: #eceae8; border: 1px solid #d2d0ce; }
.filters p { display: flex; align-items: center; height: 9px; }
.drop { height: 12px; padding-left: 3px; line-height: 10px; background: #fff; border: 1px dotted #ccc; }

.fields { width: 131px; }
.fields h2 { padding: 0 3px 0 5px; }
.search { display: flex; align-items: center; gap: 3px; height: 13px; margin: 4px 1px 7px 2px; padding-left: 5px; background: #fff; border: 1px solid #dcdad8; }
.search input { flex: 1; min-width: 0; }
.search input::placeholder { color: #555; }
.entity { display: flex; align-items: center; gap: 2px; height: 13px; padding-left: 2px; }
.entity > svg { color: #888; }
.entity.open { height: 12px; background: #d2d0ce; }
.bold { font-weight: 700; }
.ico { position: relative; width: 9px; height: 8px; }
.ico > svg { width: 8px; height: 8px; }
.ico .tick { position: absolute; left: 4px; top: 4px; width: 6px; height: 6px; }
.measures { padding: 3px 1px 3px 0; }
.measures label { display: flex; align-items: center; height: 11px; padding-left: 14px; }
.measures svg { width: 6px; height: 7px; margin: 0 4px 0 2px; }
.measures input { appearance: none; width: 6px; height: 6px; background: #fff; border: 1px solid #dcdad8; }
.measures input:checked { background: #f2c811; border-color: #f2c811; }
.measures .selected { background: #d2d0ce; }
```
